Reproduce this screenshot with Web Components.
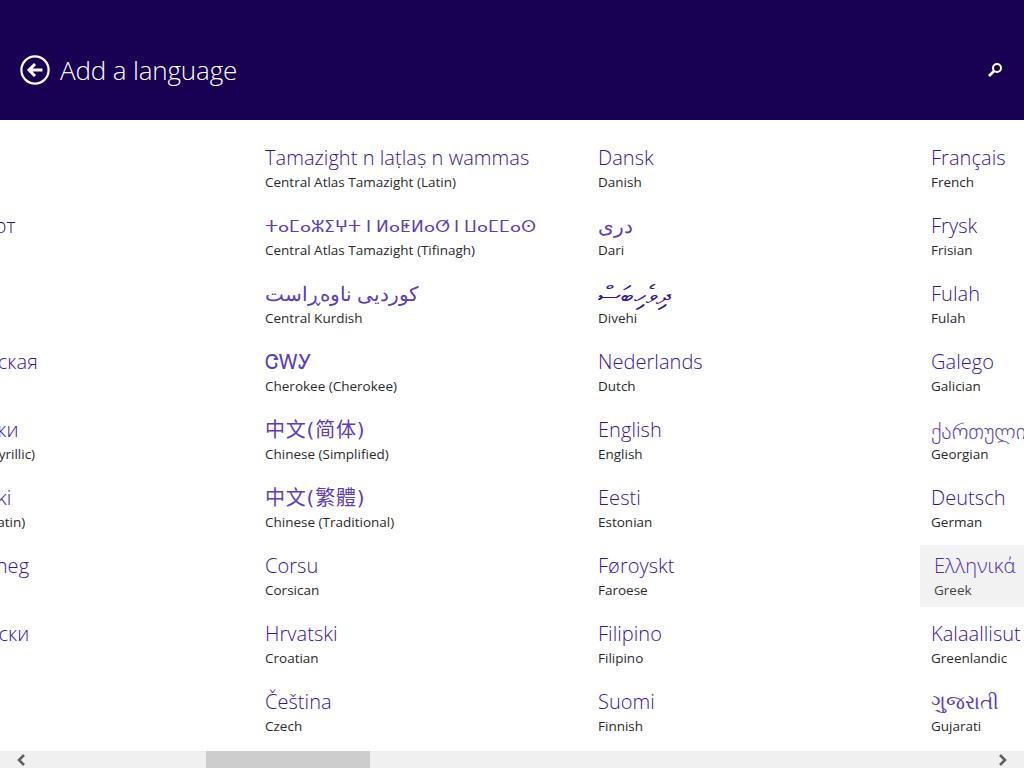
<!DOCTYPE html>
<html lang="en">
<head>
<meta charset="utf-8">
<title>Add a language</title>
<style>
  html, body { margin: 0; height: 100%; }
  body {
    display: flex;
    flex-direction: column;
    height: 768px;
    overflow: hidden;
    background: #fff;
    font-family: "Open Sans", "DejaVu Sans", "Noto Sans CJK SC", sans-serif;
  }
  /* fallback fonts come out heavier than the reference, so soften them a bit */
  .thin { --name-color: #5a3cbc; }
</style>
</head>
<body>
<page-header>Add a language</page-header>
<lang-list>
  <lang-tile>বাংলা<span slot="desc">Bangla</span></lang-tile>
  <lang-tile>Башҡорт<span slot="desc">Bashkir</span></lang-tile>
  <lang-tile>Basque<span slot="desc">Basque</span></lang-tile>
  <lang-tile>Беларуская<span slot="desc">Belarusian</span></lang-tile>
  <lang-tile>босански<span slot="desc">Bosnian (Cyrillic)</span></lang-tile>
  <lang-tile>bosanski<span slot="desc">Bosnian (Latin)</span></lang-tile>
  <lang-tile>brezhoneg<span slot="desc">Breton</span></lang-tile>
  <lang-tile>български<span slot="desc">Bulgarian</span></lang-tile>
  <lang-tile>català<span slot="desc">Catalan</span></lang-tile>

  <lang-tile>Tamazight n laṭlaṣ n wammas<span slot="desc">Central Atlas Tamazight (Latin)</span></lang-tile>
  <lang-tile class="thin" style="--name-size:17.3px">ⵜⴰⵎⴰⵣⵉⵖⵜ ⵏ ⵍⴰⵟⵍⴰⵚ ⵏ ⵡⴰⵎⵎⴰⵙ<span slot="desc">Central Atlas Tamazight (Tifinagh)</span></lang-tile>
  <lang-tile class="thin">کوردیی ناوەڕاست<span slot="desc">Central Kurdish</span></lang-tile>
  <lang-tile class="thin">ᏣᎳᎩ<span slot="desc">Cherokee (Cherokee)</span></lang-tile>
  <lang-tile class="thin" style="--name-font:'DejaVu Sans','Noto Sans CJK SC',sans-serif;--name-weight:400;--name-spacing:.8px">中文(简体)<span slot="desc">Chinese (Simplified)</span></lang-tile>
  <lang-tile class="thin" style="--name-font:'DejaVu Sans','Noto Sans CJK TC',sans-serif;--name-weight:400;--name-spacing:.8px">中文(繁體)<span slot="desc">Chinese (Traditional)</span></lang-tile>
  <lang-tile>Corsu<span slot="desc">Corsican</span></lang-tile>
  <lang-tile>Hrvatski<span slot="desc">Croatian</span></lang-tile>
  <lang-tile>Čeština<span slot="desc">Czech</span></lang-tile>

  <lang-tile>Dansk<span slot="desc">Danish</span></lang-tile>
  <lang-tile class="thin">دری<span slot="desc">Dari</span></lang-tile>
  <lang-tile style="--name-size:26px">ދިވެހިބަސް<span slot="desc">Divehi</span></lang-tile>
  <lang-tile>Nederlands<span slot="desc">Dutch</span></lang-tile>
  <lang-tile>English<span slot="desc">English</span></lang-tile>
  <lang-tile>Eesti<span slot="desc">Estonian</span></lang-tile>
  <lang-tile>Føroyskt<span slot="desc">Faroese</span></lang-tile>
  <lang-tile>Filipino<span slot="desc">Filipino</span></lang-tile>
  <lang-tile>Suomi<span slot="desc">Finnish</span></lang-tile>

  <lang-tile>Français<span slot="desc">French</span></lang-tile>
  <lang-tile>Frysk<span slot="desc">Frisian</span></lang-tile>
  <lang-tile>Fulah<span slot="desc">Fulah</span></lang-tile>
  <lang-tile>Galego<span slot="desc">Galician</span></lang-tile>
  <lang-tile class="thin" style="--name-size:22px">ქართული<span slot="desc">Georgian</span></lang-tile>
  <lang-tile>Deutsch<span slot="desc">German</span></lang-tile>
  <lang-tile hover>Ελληνικά<span slot="desc">Greek</span></lang-tile>
  <lang-tile>Kalaallisut<span slot="desc">Greenlandic</span></lang-tile>
  <lang-tile class="thin">ગુજરાતી<span slot="desc">Gujarati</span></lang-tile>
</lang-list>
<h-scrollbar></h-scrollbar>

<script>
class PageHeader extends HTMLElement {
  connectedCallback() {
    const root = this.attachShadow({mode: 'open'});
    root.innerHTML = `
      <style>
        :host {
          display: flex;
          align-items: center;
          flex: none;
          box-sizing: border-box;
          height: 120px;
          padding: 20px 20px 0 20px;
          background: #180052;
          color: #fff;
        }
        .back { display: block; width: 30px; height: 30px; margin-right: 10px; flex: none; }
        .title { flex: 1; font-size: 26px; font-weight: 300; line-height: 36px; letter-spacing: -.15px; white-space: nowrap; }
        .search { display: block; width: 16px; height: 16px; margin-right: 1px; flex: none; }
      </style>
      <svg class="back" viewBox="0 0 30 30" fill="none" stroke="#fff">
        <circle cx="15" cy="15" r="13.6" stroke-width="2.2"/>
        <path d="M22.5 15H9.5M15 9l-6 6 6 6" stroke-width="3"/>
      </svg>
      <div class="title"><slot></slot></div>
      <svg class="search" viewBox="0 0 16 16" fill="none" stroke="#fff">
        <circle cx="10" cy="6" r="4" stroke-width="2"/>
        <path d="M7 9l-5 5" stroke-width="2.6"/>
      </svg>`;
  }
}

class LangList extends HTMLElement {
  connectedCallback() {
    const root = this.attachShadow({mode: 'open'});
    root.innerHTML = `
      <style>
        :host { display: block; flex: 1; min-height: 0; overflow: hidden; }
        .grid {
          display: grid;
          grid-auto-flow: column;
          grid-template-rows: repeat(9, 62px);
          grid-auto-columns: 322px;
          gap: 6px 11px;
          margin: 17px 0 0 -79px;
          width: max-content;
        }
      </style>
      <div class="grid"><slot></slot></div>`;
  }
}

class LangTile extends HTMLElement {
  connectedCallback() {
    const root = this.attachShadow({mode: 'open'});
    root.innerHTML = `
      <style>
        :host {
          display: block;
          box-sizing: border-box;
          padding: 7px 11px 0;
          white-space: nowrap;
          overflow: hidden;
        }
        :host([hover]) { background: #f2f2f2; padding-left: 14px; }
        .name {
          color: var(--name-color, #3a12a0);
          font-family: var(--name-font, inherit);
          font-size: var(--name-size, 20px);
          font-weight: var(--name-weight, 300);
          height: 28px;
          line-height: 28px;
          letter-spacing: var(--name-spacing, .05px);
        }
        .desc { color: #2a2a2a; font-size: 13.5px; line-height: 20px; }
        :host([hover]) .name { color: #5030b0; }
        :host([hover]) .desc { color: #444; }
      </style>
      <div class="name"><slot></slot></div>
      <div class="desc"><slot name="desc"></slot></div>`;
  }
}

class HScrollbar extends HTMLElement {
  connectedCallback() {
    const root = this.attachShadow({mode: 'open'});
    root.innerHTML = `
      <style>
        :host {
          display: flex;
          flex: none;
          align-items: stretch;
          height: 17px;
          background: #f0f0f0;
        }
        .arrow { display: block; width: 12px; height: 12px; margin: 3px 15px 0; flex: none; }
        .track { flex: 1; padding-left: 164px; }
        .thumb { width: 164px; height: 100%; background: #cdcdcd; }
      </style>
      <svg class="arrow" viewBox="0 0 12 12" fill="none" stroke="#606060" stroke-width="2.6"><path d="M9 1L4 6l5 5"/></svg>
      <div class="track"><div class="thumb"></div></div>
      <svg class="arrow" viewBox="0 0 12 12" fill="none" stroke="#606060" stroke-width="2.6"><path d="M3 1l5 5-5 5"/></svg>`;
  }
}

customElements.define('page-header', PageHeader);
customElements.define('lang-list', LangList);
customElements.define('lang-tile', LangTile);
customElements.define('h-scrollbar', HScrollbar);
</script>
</body>
</html>
